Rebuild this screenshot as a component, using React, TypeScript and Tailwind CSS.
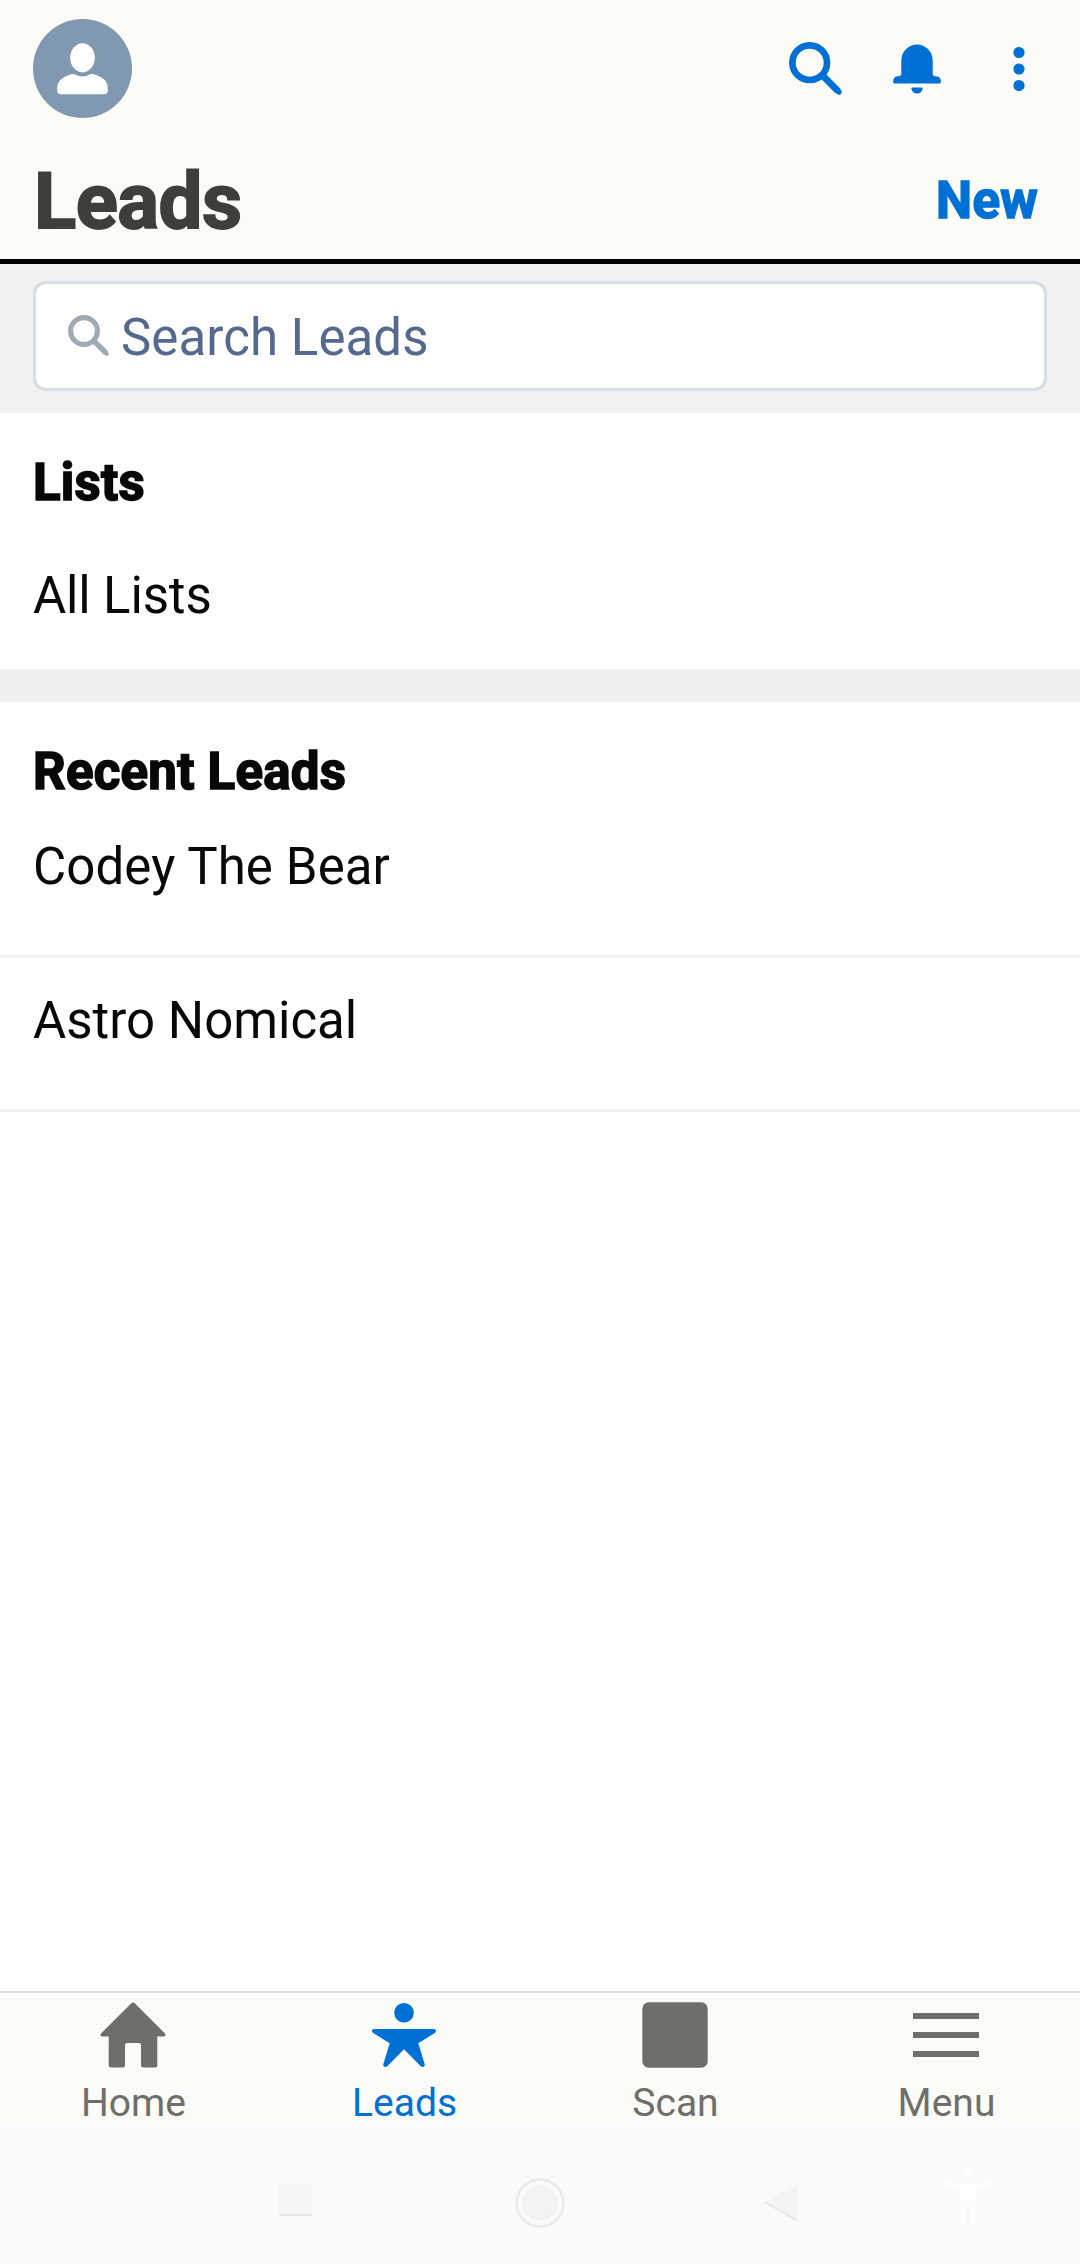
import type { ReactNode } from "react";

function SearchGlyph({ className }: { className: string }) {
  return (
    <svg viewBox="0 0 52 52" className={className} fill="none" stroke="currentColor">
      <circle cx="20.3" cy="20.3" r="17" strokeWidth="6.5" />
      <path d="M32.5 32.5L48.2 48.2" strokeWidth="6.8" />
      <path d="M47.4 47.4L49 49" strokeWidth="5.4" strokeLinecap="round" />
    </svg>
  );
}

function Header() {
  return (
    <header className="h-[264px] border-b-[5px] border-black bg-[#fbfbf8]">
      <div className="flex h-[137px] items-center justify-between pl-[33px] pr-[54px]">
        <div className="flex size-[99px] items-center justify-center rounded-full bg-[#8098b0] text-white">
          <svg viewBox="0 0 51 52" className="h-[52px] w-[51px]" fill="currentColor">
            <ellipse cx="25.5" cy="14.8" rx="12.3" ry="14.6" />
            <path d="M4 51.3Q0.2 51.3 0.2 47.5V45C0.2 37 7.5 33.4 14.8 31.1Q16.6 30.6 18.3 31.5Q25.5 35.3 32.7 31.5Q34.4 30.6 36.2 31.1C43.5 33.4 50.8 37 50.8 45V47.5Q50.8 51.3 47 51.3Z" />
          </svg>
        </div>
        <div className="flex items-center text-[#0070d4]">
          <SearchGlyph className="mr-[51px] size-[53px]" />
          <svg viewBox="0 0 48 50" className="mr-[73px] h-[50px] w-12" fill="currentColor">
            <path d="M8.3 16.5A15.7 16 0 0 1 39.7 16.5V29.5Q39.7 32.3 42.5 32.3Q47.8 32.3 47.8 37V38Q47.8 39.5 46.3 39.5H1.7Q0.2 39.5 0.2 38V37Q0.2 32.3 5.5 32.3Q8.3 32.3 8.3 29.5Z" />
            <path d="M19.3 43.5H28.7Q30 43.5 29.6 44.9Q28.2 49.5 24 49.5Q19.8 49.5 18.4 44.9Q18 43.5 19.3 43.5Z" />
          </svg>
          <svg viewBox="0 0 12 46" className="h-[46px] w-3 overflow-visible" fill="currentColor">
            <circle cx="5" cy="6.5" r="5.6" />
            <circle cx="5" cy="23" r="5.6" />
            <circle cx="5" cy="39.5" r="5.6" />
          </svg>
        </div>
      </div>
      <div className="flex h-[122px] items-center justify-between pl-[34px] pr-[42px] pt-2">
        <h1 className="text-[78px] leading-none font-bold tracking-[-0.5px] text-[#3e3e3a] [-webkit-text-stroke:1.8px_currentColor]">
          Leads
        </h1>
        <button className="-mt-[3px] text-[51px] leading-none font-bold tracking-[0.3px] text-[#0070d4] [-webkit-text-stroke:1.6px_currentColor]">
          New
        </button>
      </div>
    </header>
  );
}

function SectionTitle({ children }: { children: ReactNode }) {
  return (
    <h2 className="text-[51px] leading-[60px] font-bold tracking-[0.25px] [-webkit-text-stroke:1.6px_currentColor]">
      {children}
    </h2>
  );
}

function Tab({ label, active, children }: { label: string; active?: boolean; children: ReactNode }) {
  return (
    <div className={`flex w-[271px] flex-col items-center pt-[9px] ${active ? "text-[#0070d4]" : "text-[#706e6b]"}`}>
      <svg viewBox="0 0 66 66" className="mr-px size-[66px]" fill="currentColor">
        {children}
      </svg>
      <span className="mt-[11px] text-[39px] leading-[48px]">{label}</span>
    </div>
  );
}

export default function App() {
  return (
    <div className="flex h-[2264px] w-[1080px] flex-col overflow-hidden bg-white font-['Roboto',sans-serif] text-[#080808]">
      <Header />
      <div className="h-[149px] bg-[#f1f1f1] px-[33px] pt-[17px]">
        <div className="flex h-[110px] items-center rounded-[13px] border-[3px] border-[#d8dde6] bg-white pl-8">
          <SearchGlyph className="mt-[-1px] size-[41px] text-[#9faab5]" />
          <span className="ml-3 mt-1 text-[51px] leading-[60px] tracking-[0.08px] text-[#54698d]">Search Leads</span>
        </div>
      </div>
      <section className="h-[256px] px-[33px] pt-10">
        <SectionTitle>Lists</SectionTitle>
        <p className="mt-[53px] text-[51px] leading-[60px] tracking-[-0.15px]">All Lists</p>
      </section>
      <div className="h-[33px] bg-[#f0f0f0]" />
      <section>
        <div className="h-[256px] border-b-[3px] border-[#f1f1f1] px-[33px] pt-10">
          <SectionTitle>Recent Leads</SectionTitle>
          <p className="mt-[35px] text-[51px] leading-[60px] tracking-[0.1px]">Codey The Bear</p>
        </div>
        <div className="h-[154px] border-b-[3px] border-[#f1f1f1] px-[33px] pt-[33px]">
          <p className="text-[51px] leading-[60px]">Astro Nomical</p>
        </div>
      </section>
      <footer className="mt-auto">
        <nav className="flex h-[136px] justify-center border-t-2 border-[#dddddd] bg-[#fbfbf8]">
          <div className="flex shrink-0">
            <Tab label="Home">
              <path d="M31.3 1.2Q33 -0.3 34.7 1.2L65 31.6Q66.5 34.4 63.5 34.6H57.3V63.5Q57.3 65.5 55.3 65.5H43Q41 65.5 41 63.5V43Q41 41 39 41H27Q25 41 25 43V63.5Q25 65.5 23 65.5H10.7Q8.7 65.5 8.7 63.5V34.6H2.5Q-0.5 34.4 1 31.6Z" />
            </Tab>
            <Tab label="Leads" active>
              <circle cx="33" cy="10.7" r="9.8" />
              <path d="M3.2 27H62.8Q65 27 65 29Q65 30.3 63.8 31L47.3 41.3L53.7 62.3Q54.2 65 51.5 65Q50.3 65 49.5 64L33 47.3L16.5 64Q15.7 65 14.5 65Q11.8 65 12.3 62.3L18.7 41.3L2.2 31Q1 30.3 1 29Q1 27 3.2 27Z" />
            </Tab>
            <Tab label="Scan">
              <rect x="0.3" y="0.3" width="65.4" height="65.4" rx="6.5" />
            </Tab>
            <Tab label="Menu">
              <path d="M0 11H66V17H0ZM0 30H66V36H0ZM0 49H66V55H0Z" />
            </Tab>
          </div>
        </nav>
        <div className="flex h-[137px] items-center bg-[#fafafa] pl-[278px]">
          <svg viewBox="0 0 36 40" className="mt-2 h-10 w-9">
            <rect x="1" y="4" width="33" height="32" fill="#f5f5f5" />
            <rect x="2" y="34" width="32" height="2" fill="#e6e6e6" />
          </svg>
          <svg viewBox="0 0 52 52" className="ml-[200px] mt-3.5 size-[52px]">
            <circle cx="26" cy="26" r="23.5" fill="none" stroke="#ebebeb" strokeWidth="2.5" />
            <circle cx="26" cy="26" r="16.5" fill="#f3f3f3" stroke="#efefef" strokeWidth="1.5" />
          </svg>
          <svg viewBox="0 0 36 40" className="ml-[198px] mt-3 h-10 w-9">
            <path d="M33 2V38L1 20Z" fill="#f4f4f4" />
            <path d="M1 20L32 38" stroke="#e6e6e6" strokeWidth="2" />
          </svg>
          <svg viewBox="0 0 48 60" className="ml-[144px] h-[60px] w-12" fill="#fdfdfd">
            <circle cx="24" cy="7" r="6" />
            <path d="M0 15Q24 21 48 15V19L33 22V57H26V39H22V57H15V22L0 19Z" />
          </svg>
        </div>
      </footer>
    </div>
  );
}
